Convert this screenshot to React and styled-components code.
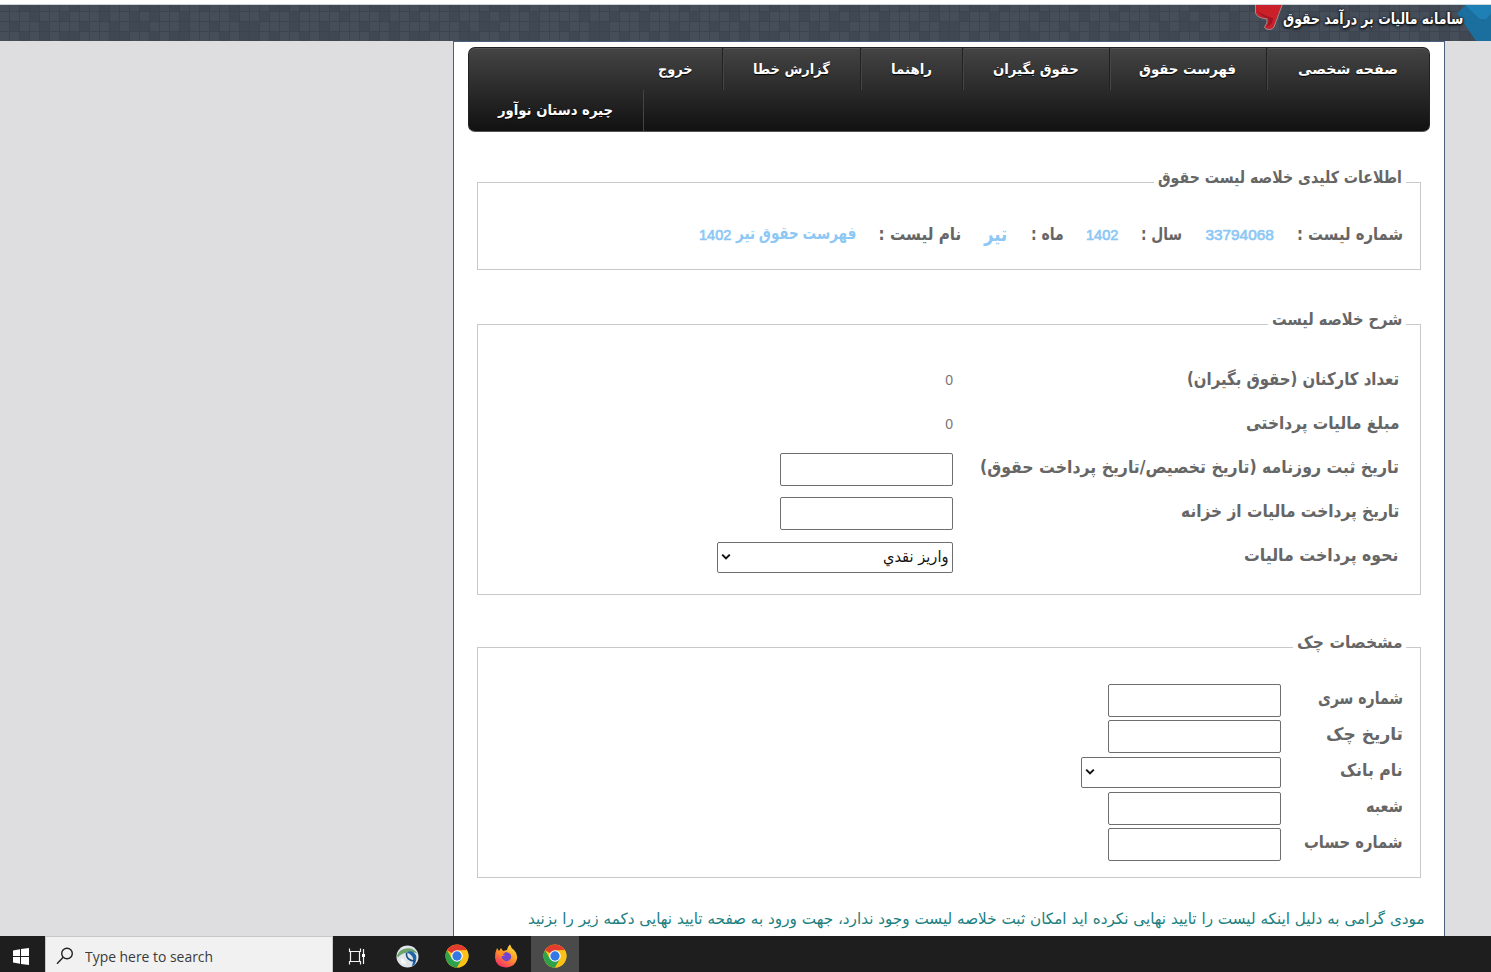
import React, { useLayoutEffect, useRef, useState } from 'react';
import styled, { createGlobalStyle, css } from 'styled-components';

const Global = createGlobalStyle`
  * { box-sizing: border-box; }
  body { margin: 0; background: #fff; overflow: hidden; font-family: "DejaVu Sans", sans-serif; }
`;

const Screen = styled.div`
  width: 1491px; height: 972px; display: flex; flex-direction: column; overflow: hidden;
  background: #dedee0;
`;
const TopStrip = styled.div`height: 5px; flex: none; background: #fff; border-bottom: 1px solid #ccd4dc;`;
const Header = styled.header`
  height: 36px; flex: none; position: relative; direction: rtl; display: flex; align-items: center;
  padding: 0 28px 8px 0; background: #424b57; overflow: hidden;
`;
const HeaderArt = styled.svg`position: absolute; left: 0; top: 0;`;
const HeaderTitle = styled.div`
  position: relative; color: #fff; font-weight: bold; font-size: 15.5px; line-height: 20px;
  text-shadow: 0 1px 3px #000, 0 0 3px #000;
`;
const Main = styled.main`
  height: 895px; flex: none; display: flex; direction: rtl; padding-right: 46px; overflow: hidden;
`;
const Page = styled.div`
  width: 992px; background: #fff; border: 1px solid #4a607c; border-bottom: 0; padding: 5px 14px 0;
`;
const Nav = styled.nav`
  height: 85px; border-radius: 7px; display: flex; flex-wrap: wrap; align-content: flex-start;
  background: linear-gradient(#444, #111); border: 1px solid #222; border-bottom-color: #555;
  box-shadow: inset 0 1px 0 #555;
`;
const NavItem = styled.a`
  width: ${p => p.$w}px; height: ${p => (p.$last ? 41 : 42)}px; display: flex; justify-content: center;
  align-items: center; color: #fff; font-weight: bold; font-size: 14px; line-height: 20px;
  text-shadow: 0 1px 1px #000;
  ${p => !p.$last && css`border-left: 1px solid #222; box-shadow: inset 1px 0 0 #454545;`}
  ${p => p.$plain && css`border-left: 0; box-shadow: none;`}
  ${p => p.$last && css`margin-right: auto; border-right: 1px solid #444; padding: 0 1px 2px 0;`}
`;
const Group = styled.fieldset`
  height: ${p => p.$h}px; margin: ${p => p.$top}px 9px 0; border: 1px solid #c9c9c9;
  padding: ${p => p.$pad}; min-width: 0;
`;
const Legend = styled.legend`
  height: 24px; padding: 0 4px; margin: 0 ${p => p.$shift}px 0 0; color: #666; font-weight: bold;
  font-size: 16.5px; line-height: 16px;
`;
const KeyRow = styled.div`display: flex; align-items: center; gap: 23px; height: 40px; line-height: 24px;`;
const Label = styled.span`color: #666; font-weight: bold; font-size: ${p => p.$size || 17.5}px; line-height: 24px;`;
const KeyValue = styled(Label)`
  color: #8dc8f5; font-size: ${p => p.$size || 15}px; font-family: "Liberation Sans", "DejaVu Sans", sans-serif;
  padding-top: ${p => (p.$size ? 0 : 1)}px;
`;
const Numeric = styled(KeyValue)`font-weight: normal; -webkit-text-stroke: 0.7px #8dc8f5;`;
const NameValue = styled.span`display: flex; gap: 5px;`;
const FormRow = styled.div`
  display: flex; align-items: center; height: ${p => p.$h}px;
`;
const LabelCell = styled.div`width: ${p => p.$w}px; flex: none; padding-bottom: ${p => p.$lift || 0}px;`;
const Zero = styled.span`color: #777; font-family: "Liberation Sans", sans-serif; font-size: 14px;`;
const Input = styled.input`
  width: 173px; height: 33px; border: 1px solid #6e6e6e; border-radius: 2px; background: #fff; padding: 0 4px;
  margin: 2px 0 0;
`;
const Select = styled.div`
  width: ${p => p.$w}px; height: 31px; border: 1px solid #6e6e6e; border-radius: 2px; background: #fff;
  display: flex; align-items: center; justify-content: space-between; padding: 0 4px 1px 3px; margin-top: 2px;
  color: #111; font-size: 15.5px; line-height: 24px;
`;
const Notice = styled.p`margin: 29px 5px 0; height: 26px; color: #1c7f80; font-size: 15.5px; line-height: 24px;`;

const Taskbar = styled.footer`height: 36px; flex: none; display: flex; background: #1e1e1e;`;
const TaskButton = styled.div`
  width: ${p => p.$w}px; display: flex; align-items: center; justify-content: center; padding-top: 4px;
  padding-right: ${p => p.$nudge || 0}px;
  background: ${p => (p.$active ? '#4a4a4a' : 'transparent')};
`;
const Search = styled.div`
  width: 288px; background: #f1f1f1; border: 1px solid #c8c8c8; border-bottom: 0; display: flex;
  align-items: center; gap: 11px; padding: 3px 0 0 10px; color: #3a3a3a;
  font-family: "Open Sans", "Noto Sans", sans-serif; font-size: 15px;
`;

const FitBox = styled.span`display: inline-block; width: ${p => p.$w}px; flex: none; white-space: nowrap; vertical-align: top;`;
const FitInner = styled.span`display: inline-block; transform-origin: ${p => (p.$ltr ? 'left' : 'right')} center;`;

// Sets a phrase to an exact width by condensing or widening its glyphs.
function Fit({ w, ltr, children }) {
  const ref = useRef(null);
  const [scale, setScale] = useState(1);
  useLayoutEffect(() => {
    setScale(w / ref.current.offsetWidth);
  }, [w, children]);
  return (
    <FitBox $w={w}>
      <FitInner ref={ref} $ltr={ltr} style={{ transform: `scaleX(${scale})` }}>{children}</FitInner>
    </FitBox>
  );
}

const TILE_ROWS = [
  '00110001001000110100100100011010010',
  '00010010001001010010000100100100001',
  '01001000100101100010010011000100100',
  '00101011000110010110001011010010110',
];

function HeaderBackdrop() {
  const tiles = [];
  for (let c = 0; c < 150; c++) {
    for (let r = 0; r < 4; r++) {
      if (TILE_ROWS[r][c % 35] === '1') tiles.push(<rect key={`${c}-${r}`} x={c * 10} y={r * 10 - 3} width="9" height="9" fill="#3f4853" />);
    }
  }
  return (
    <HeaderArt width="1491" height="36">
      <defs>
        <pattern id="grid" width="10" height="10" patternUnits="userSpaceOnUse" y="-4">
          <path d="M9.5 0V10M0 .5H10" stroke="#3b444f" />
        </pattern>
      </defs>
      <rect width="1491" height="36" fill="#454e59" />
      {tiles}
      <rect width="1491" height="36" fill="url(#grid)" />
      <path d="M1466 0L1457 8L1476 36H1491V0Z" fill="#1b6f9f" />
      <path d="M1465 0L1480 14H1486L1491 9V0Z" fill="#1e80b4" />
      <path d="M1255.5 -1H1282.5L1274 22Q1273 24.5 1269 24.5Q1265 24.5 1264.5 22Q1268 18 1267 14Q1257 13 1255.5 8Z" fill="#c9202a" stroke="#a08c92" strokeWidth="1" />
      <path d="M1256 5Q1262 12 1268 13Q1270 18 1266 22Q1273 20 1273 13Q1264 11 1256 5Z" fill="#a01622" />
    </HeaderArt>
  );
}

const Chevron = () => (
  <svg width="10" height="8" viewBox="0 0 10 8"><path d="M1.2 1.6L5 5.4L8.8 1.6" fill="none" stroke="#111" strokeWidth="2" /></svg>
);
const Chrome = () => (
  <svg width="24" height="24" viewBox="0 0 48 48">
    <circle cx="24" cy="24" r="23" fill="#fbc116" />
    <path d="M24 24L4.1 12.5A23 23 0 0 1 43.9 12.5H24Z" fill="#e33b2e" />
    <path d="M4.1 12.5A23 23 0 0 0 24 47L34 29.8L24 24L14 29.8Z" fill="#2da14c" />
    <path d="M43.9 12.5A23 23 0 0 1 24 47L34 29.8L34 12.5Z" fill="#fbc116" />
    <circle cx="24" cy="24" r="11.5" fill="#fff" /><circle cx="24" cy="24" r="9.3" fill="#3478e5" />
  </svg>
);
const Firefox = () => (
  <svg width="24" height="24" viewBox="0 0 24 24">
    <defs><linearGradient id="fox" x1=".8" y1="0" x2=".2" y2="1"><stop stopColor="#ffe23c" /><stop offset=".45" stopColor="#ff9a28" /><stop offset="1" stopColor="#f3246b" /></linearGradient></defs>
    <path d="M3 4L5 7L7 4L9 7L13 6Q14 2 16 .5Q17 4 20 6Q24 10 23 15Q21 23 12 23.5Q2 23 1 14Q1 8 3 4Z" fill="url(#fox)" />
    <path d="M8 10L12 8Q18 9 17 14Q15 18 11 17Q7 15 8 12L11 12Z" fill="#7444cf" />
    <path d="M4 8Q8 6 11 9L8 11Q6 11 6 13Z" fill="#ff9320" />
  </svg>
);
const Globe = () => (
  <svg width="23" height="23" viewBox="0 0 24 24">
    <circle cx="12" cy="12" r="11.5" fill="#dfe5e8" />
    <path d="M1 11Q4 4 12 3.5Q18 3 22.5 9Q16 5.5 10 8Q5 9 2 13Z" fill="#6ba36a" />
    <path d="M11 8Q17 4 21 11Q22 16 19 21L16.500 22Q19 16 17 12Q14 8 11 8Z" fill="#2065a8" />
    <path d="M11 8Q10 16 20 17" fill="none" stroke="#174f87" strokeWidth="1.6" />
    <path d="M5 14Q9 14 11 19Q7 21 5 18Z" fill="#f6f8f9" />
  </svg>
);
const TaskView = () => (
  <svg width="18" height="17" viewBox="0 0 18 17" fill="none" stroke="#f2f2f2" strokeWidth="1.2">
    <path d="M1.5 .5V3.5H12.5V.5M1.5 16.5V13.5H12.5V16.5M2.5 3.5V13.5M11.5 3.5V13.5M15.5 1V16" /><path d="M14 6H17V9H14Z" fill="#fff" stroke="none" />
  </svg>
);

const NAV = [
  ['صفحه شخصی', 163, 100], ['فهرست حقوق', 157, 97], ['حقوق بگیران', 147, 86],
  ['راهنما', 102, 41], ['گزارش خطا', 138, 77], ['خروج', 94, 35],
];

export default function App() {
  return (
    <Screen>
      <Global />
      <TopStrip />
      <Header>
        <HeaderBackdrop />
        <HeaderTitle><Fit w={180}>سامانه مالیات بر درآمد حقوق</Fit></HeaderTitle>
      </Header>
      <Main>
        <Page>
          <Nav>
            {NAV.map(([t, w, tw], i) => (
              <NavItem key={t} $w={w} $plain={i === 5}><Fit w={tw}>{t}</Fit></NavItem>
            ))}
            <NavItem $w={175} $last><Fit w={115}>چیره دستان نوآور</Fit></NavItem>
          </Nav>

          <Group $h={100} $top={38} $pad="20px 17px 0">
            <Legend $shift={-3}><Fit w={244}>اطلاعات کلیدی خلاصه لیست حقوق</Fit></Legend>
            <KeyRow>
              <Label><Fit w={106}>شماره لیست :</Fit></Label>
              <Numeric><Fit w={68.5}>33794068</Fit></Numeric>
              <Label><Fit w={41}>سال :</Fit></Label>
              <Numeric><Fit w={32}>1402</Fit></Numeric>
              <Label><Fit w={33}>ماه :</Fit></Label>
              <KeyValue $size={20}><Fit w={23}>تیر</Fit></KeyValue>
              <Label><Fit w={82.5}>نام لیست :</Fit></Label>
              <NameValue>
                <KeyValue $size={17}><Fit w={120}>فهرست حقوق تیر</Fit></KeyValue>
                <Numeric><Fit w={32}>1402</Fit></Numeric>
              </NameValue>
            </KeyRow>
          </Group>

          <Group $h={283} $top={42} $pad="22px 21px 0">
            <Legend $shift={-7}><Fit w={130}>شرح خلاصه لیست</Fit></Legend>
            <FormRow $h={44}><LabelCell $w={446} $lift={2}><Label><Fit w={212}>تعداد کارکنان (حقوق بگیران)</Fit></Label></LabelCell><Zero>0</Zero></FormRow>
            <FormRow $h={44}><LabelCell $w={446} $lift={2}><Label><Fit w={153}>مبلغ مالیات پرداختی</Fit></Label></LabelCell><Zero>0</Zero></FormRow>
            <FormRow $h={44}><LabelCell $w={446} $lift={2}><Label><Fit w={419}>تاریخ ثبت روزنامه (تاریخ تخصیص/تاریخ پرداخت حقوق)</Fit></Label></LabelCell><Input /></FormRow>
            <FormRow $h={44}><LabelCell $w={446} $lift={2}><Label><Fit w={218}>تاریخ پرداخت مالیات از خزانه</Fit></Label></LabelCell><Input /></FormRow>
            <FormRow $h={44}><LabelCell $w={446} $lift={2}><Label><Fit w={155}>نحوه پرداخت مالیات</Fit></Label></LabelCell><Select $w={236}><Fit w={66}>واریز نقدي</Fit><Chevron /></Select></FormRow>
          </Group>

          <Group $h={243} $top={40} $pad="22px 17px 0">
            <Legend $shift={-3}><Fit w={105}>مشخصات چک</Fit></Legend>
            <FormRow $h={36}><LabelCell $w={122} $lift={3}><Label><Fit w={85}>شماره سری</Fit></Label></LabelCell><Input /></FormRow>
            <FormRow $h={36}><LabelCell $w={122} $lift={3}><Label><Fit w={77}>تاریخ چک</Fit></Label></LabelCell><Input /></FormRow>
            <FormRow $h={36}><LabelCell $w={122} $lift={3}><Label><Fit w={63}>نام بانک</Fit></Label></LabelCell><Select $w={200}><span /><Chevron /></Select></FormRow>
            <FormRow $h={36}><LabelCell $w={122} $lift={3}><Label><Fit w={37}>شعبه</Fit></Label></LabelCell><Input /></FormRow>
            <FormRow $h={36}><LabelCell $w={122} $lift={3}><Label><Fit w={99}>شماره حساب</Fit></Label></LabelCell><Input /></FormRow>
          </Group>

          <Notice><Fit w={897}>مودی گرامی به دلیل اینکه لیست را تایید نهایی نکرده اید امکان ثبت خلاصه لیست وجود ندارد، جهت ورود به صفحه تایید نهایی دکمه زیر را بزنید</Fit></Notice>
        </Page>
      </Main>
      <Taskbar>
        <TaskButton $w={45} $nudge={4}>
          <svg width="16" height="17" viewBox="0 0 16 17" fill="#fff"><path d="M0 2.4L7 1.3V8H0ZM8 1.1L16 0V8H8ZM0 9H7V15.7L0 14.6ZM8 9H16V17L8 15.9Z" /></svg>
        </TaskButton>
        <Search>
          <svg width="18" height="18" viewBox="0 0 18 18" fill="none" stroke="#222" strokeWidth="1.4"><circle cx="11" cy="6.5" r="5.3" /><path d="M7.2 10.3L1 16.8" /></svg>
          <Fit w={128} ltr>Type here to search</Fit>
        </Search>
        <TaskButton $w={49} $nudge={2}><TaskView /></TaskButton>
        <TaskButton $w={51}><Globe /></TaskButton>
        <TaskButton $w={48}><Chrome /></TaskButton>
        <TaskButton $w={50}><Firefox /></TaskButton>
        <TaskButton $w={48} $active><Chrome /></TaskButton>
      </Taskbar>
    </Screen>
  );
}
